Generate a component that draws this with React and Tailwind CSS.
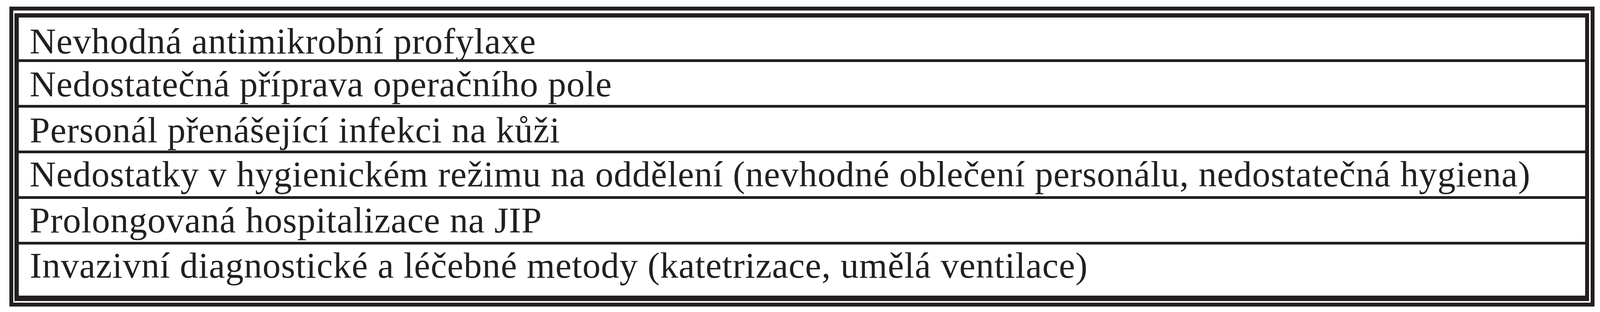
export default function App() {
  const rows = [
    { text: "Nevhodná antimikrobní profylaxe", cls: "h-[114px] pt-[9px] border-b-[7px]" },
    { text: "Nedostatečná příprava operačního pole", cls: "h-[117px] pt-[5px] border-b-[7px]" },
    { text: "Personál přenášející infekci na kůži", cls: "h-[117px] pt-[6px] border-b-[7px]" },
    { text: "Nedostatky v hygienickém režimu na oddělení (nevhodné oblečení personálu, nedostatečná hygiena)", cls: "h-[117px] pt-[2px] border-b-[7px]" },
    { text: "Prolongovaná hospitalizace na JIP", cls: "h-[117px] pt-[3px] border-b-[7px]" },
    { text: "Invazivní diagnostické a léčebné metody (katetrizace, umělá ventilace)", cls: "h-[124px] pt-[2px]" },
  ];
  return (
    <div className="w-full h-[800px] bg-white pt-[17px] pl-[24px] pr-[14px] overflow-hidden">
      <div className="w-full h-[769px] border-[10px] border-[#231f20] pt-[7px] pl-[3px] pr-[4px] pb-[4px]">
        <div className="h-full border-solid border-[#231f20] border-t-[11px] border-l-[11px] border-r-[10px] border-b-[14px] flex flex-col">
          {rows.map((r, i) => (
            <div
              key={i}
              className={`${r.cls} shrink-0 border-[#231f20] pl-[28px] text-[93px] leading-[103px] tracking-[1px] text-[#231f20] whitespace-nowrap overflow-hidden`}
              style={{ fontFamily: '"Liberation Serif", "Times New Roman", serif' }}
            >
              {r.text}
            </div>
          ))}
        </div>
      </div>
    </div>
  );
}
